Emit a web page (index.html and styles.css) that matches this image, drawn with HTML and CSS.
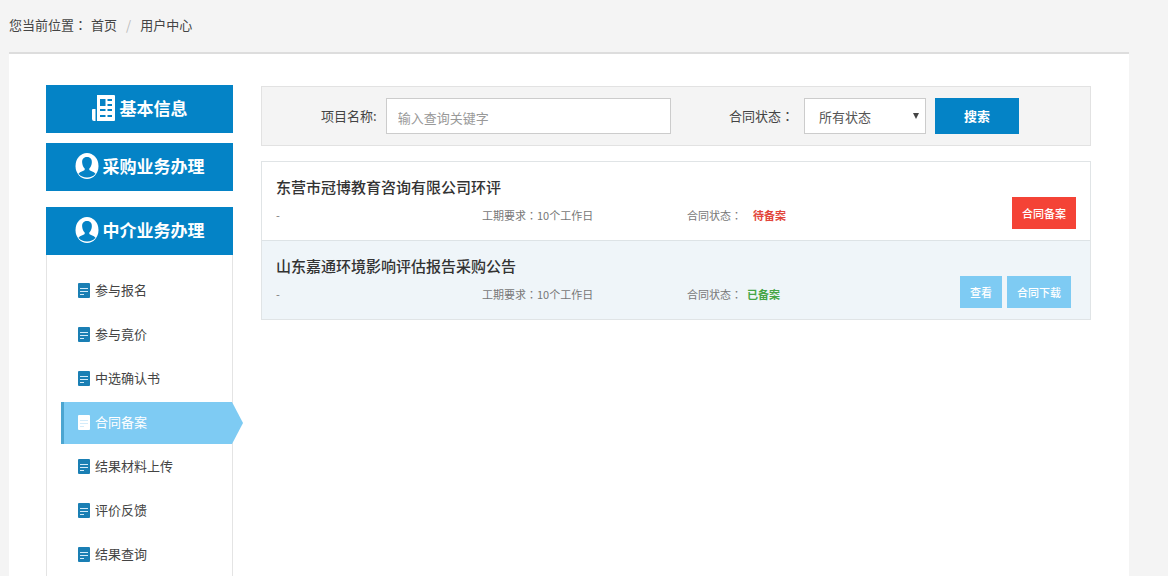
FILE: index.html
```html
<!DOCTYPE html>
<html lang="zh-CN">
<head>
<meta charset="utf-8">
<meta name="viewport" content="width=device-width, initial-scale=1">
<title>用户中心</title>
<link rel="stylesheet" href="styles.css">
</head>
<body>
<svg class="sprite" aria-hidden="true">
  <symbol id="icon-news" viewBox="0 0 24 26">
    <path fill="currentColor" fill-rule="evenodd" d="M5 0h17q1 0 1 1v24q0 1-1 1H5zM8 4v7h5.500V4zM15.500 4v2h4.500V4zM15.500 9v2h4.500V9zM8 14v2h5.500v-2zM15.500 14v2h4.500v-2zM8 20v2h5.500v-2zM15.500 20v2h4.500v-2zM1 14h2.500v12H2q-2 0-2-2v-9q0-1 1-1z"/>
  </symbol>
  <symbol id="icon-user" viewBox="0 0 24 26">
    <ellipse cx="12" cy="13" rx="11.500" ry="13" fill="currentColor"/>
    <path class="user-shape" d="M12 4c-3.600 0-5.200 2.500-4.800 6 .3 2.400 1.200 4.300 2.500 5.500v1.600c-1.300 1.400-4.400 1.500-6.200 3.600C5.500 23.300 8.500 24.500 12 24.500s6.500-1.200 8.500-3.800c-1.800-2.100-4.900-2.200-6.200-3.600v-1.600c1.300-1.200 2.200-3.100 2.500-5.500.4-3.500-1.200-6-4.800-6z"/>
  </symbol>
  <symbol id="icon-doc" viewBox="0 0 12 15">
    <rect width="12" height="15" rx="1" fill="currentColor"/>
    <path class="doc-lines" d="M2 5.500h8M2 8.500h8M2 11.500h4"/>
  </symbol>
</svg>

<nav class="breadcrumb" aria-label="您当前位置">
  <span>您当前位置<span class="colon" lang="zh-TW">：</span></span>
  <a href="#">首页</a>
  <span class="slash">/</span>
  <a href="#">用户中心</a>
</nav>

<div class="panel">
  <aside class="sidebar">
    <a class="side-title" href="#"><svg class="title-icon"><use href="#icon-news"/></svg>基本信息</a>
    <a class="side-title" href="#"><svg class="title-icon"><use href="#icon-user"/></svg>采购业务办理</a>
    <div class="side-group">
      <a class="side-title" href="#"><svg class="title-icon"><use href="#icon-user"/></svg>中介业务办理</a>
      <ul class="menu">
        <li><a class="menu-item" href="#"><svg class="doc-icon"><use href="#icon-doc"/></svg>参与报名</a></li>
        <li><a class="menu-item" href="#"><svg class="doc-icon"><use href="#icon-doc"/></svg>参与竟价</a></li>
        <li><a class="menu-item" href="#"><svg class="doc-icon"><use href="#icon-doc"/></svg>中选确认书</a></li>
        <li><a class="menu-item active" href="#" aria-current="page"><svg class="doc-icon"><use href="#icon-doc"/></svg>合同备案</a></li>
        <li><a class="menu-item" href="#"><svg class="doc-icon"><use href="#icon-doc"/></svg>结果材料上传</a></li>
        <li><a class="menu-item" href="#"><svg class="doc-icon"><use href="#icon-doc"/></svg>评价反馈</a></li>
        <li><a class="menu-item" href="#"><svg class="doc-icon"><use href="#icon-doc"/></svg>结果查询</a></li>
      </ul>
    </div>
  </aside>

  <main class="content">
    <form class="search">
      <div class="field">
        <label for="name">项目名称:</label>
        <input id="name" class="text-box" type="text" placeholder="输入查询关键字">
      </div>
      <div class="field">
        <label for="state">合同状态<span class="colon" lang="zh-TW">：</span></label>
        <span class="select-wrap">
          <select id="state" class="select-box"><option>所有状态</option></select>
        </span>
        <button class="search-button" type="button">搜索</button>
      </div>
    </form>

    <section class="list">
      <article class="row">
        <h2 class="row-title">东营市冠博教育咨询有限公司环评</h2>
        <div class="row-meta">
          <span>-</span>
          <span>工期要求<span class="colon" lang="zh-TW">：</span>10个工作日</span>
          <span>合同状态<span class="colon" lang="zh-TW">：</span><strong class="pending">待备案</strong></span>
        </div>
        <div class="row-actions">
          <button class="action danger" type="button">合同备案</button>
        </div>
      </article>
      <article class="row shaded">
        <h2 class="row-title">山东嘉通环境影响评估报告采购公告</h2>
        <div class="row-meta">
          <span>-</span>
          <span>工期要求<span class="colon" lang="zh-TW">：</span>10个工作日</span>
          <span>合同状态<span class="colon" lang="zh-TW">：</span><strong class="done">已备案</strong></span>
        </div>
        <div class="row-actions">
          <button class="action" type="button">查看</button>
          <button class="action" type="button">合同下载</button>
        </div>
      </article>
    </section>
  </main>
</div>
</body>
</html>
```
FILE: styles.css
```css
* {
  box-sizing: border-box;
}

body {
  margin: 0;
  min-height: 100vh;
  display: flex;
  flex-direction: column;
  background: #f4f4f4;
  color: #444;
  font: 13px/20px "Noto Sans CJK SC", sans-serif;
}

a {
  color: inherit;
  text-decoration: none;
}

input,
select,
button {
  font: inherit;
  border-radius: 0;
}

.sprite {
  display: none;
}

.colon {
  font-family: "Noto Sans CJK TC", sans-serif;
}

.breadcrumb {
  display: flex;
  padding: 15px 9px 17px;
}

.breadcrumb a:first-of-type {
  margin-left: 4px;
}

.slash {
  margin: 0 9px;
  color: #bbb;
}

.panel {
  flex: 1;
  display: flex;
  align-items: stretch;
  gap: 28px;
  margin: 0 39px 0 9px;
  padding: 31px 38px 0 37px;
  background: #fff;
  border-top: 2px solid #ddd;
}

.sidebar {
  flex: none;
  width: 187px;
  display: flex;
  flex-direction: column;
  gap: 10px;
}

.side-title {
  display: flex;
  align-items: center;
  justify-content: center;
  gap: 4px;
  height: 48px;
  padding-bottom: 2px;
  background: #0483c6;
  color: #fff;
  font-size: 17px;
  font-weight: 700;
}

.title-icon {
  width: 24px;
  height: 26px;
}

.user-shape {
  fill: #0483c6;
}

.side-group {
  flex: 1;
  display: flex;
  flex-direction: column;
  margin-top: 6px;
}

.menu {
  flex: 1;
  display: flex;
  flex-direction: column;
  gap: 2px;
  margin: 0;
  padding: 15px 0 0 14px;
  list-style: none;
  border: solid #e4e4e4;
  border-width: 0 1px;
}

.menu-item {
  position: relative;
  display: flex;
  align-items: center;
  gap: 5px;
  height: 42px;
  padding: 0 0 2px 14px;
  border-left: 3px solid transparent;
}

.doc-icon {
  width: 12px;
  height: 15px;
  color: #1a7fb4;
}

.doc-lines {
  fill: none;
  stroke: #d4ecfa;
}

.active {
  background: #7ecbf3;
  border-left-color: #4ba5d0;
  color: #fff;
}

.active .doc-icon {
  color: #fff;
}

.active::after {
  content: "";
  position: absolute;
  top: 0;
  left: 100%;
  width: 11px;
  height: 100%;
  background: #7ecbf3;
  clip-path: polygon(0 0, 100% 50%, 0 100%);
}

.content {
  flex: 1;
  min-width: 0;
  padding-top: 1px;
}

.search {
  display: flex;
  align-items: center;
  justify-content: space-between;
  height: 60px;
  padding: 0 71px 0 59px;
  background: #f4f4f4;
  border: 1px solid #e2e2e2;
}

.field {
  display: flex;
  align-items: center;
  gap: 9px;
}

.field label .colon {
  margin-right: 1px;
}

.text-box,
.select-box {
  height: 36px;
  background: #fff;
  border: 1px solid #ccc;
  color: #555;
}

.text-box {
  width: 285px;
  padding: 2px 11px 0;
}

.text-box::placeholder {
  color: #999;
}

.select-wrap {
  position: relative;
}

.select-box {
  display: block;
  width: 122px;
  padding: 2px 14px 0;
  appearance: none;
}

.select-wrap::after {
  content: "";
  position: absolute;
  top: 15px;
  right: 7px;
  border: solid transparent;
  border-width: 6px 3px 0;
  border-top-color: #444;
  pointer-events: none;
}

.search-button {
  width: 84px;
  height: 36px;
  padding: 0;
  background: #0483c6;
  border: 0;
  color: #fff;
  font-weight: 700;
}

.list {
  margin-top: 15px;
  border: 1px solid #e0e4e6;
}

.row {
  display: grid;
  grid-template-columns: 1fr auto;
  align-items: center;
  padding: 15px 14px 11px;
}

.shaded {
  padding-right: 19px;
  background: #eff5f9;
  border-top: 1px solid #dde3e6;
}

.row-title {
  grid-column: 1 / -1;
  margin: 0;
  color: #333;
  font-size: 15px;
  line-height: 20px;
  font-weight: 500;
}

.row-meta {
  grid-column: 1 / -1;
  grid-row: 2;
  display: grid;
  grid-template-columns: 206px 205px 1fr;
  padding-top: 4px;
  color: #777;
  font-size: 11px;
}

.row-meta strong {
  margin-left: 5px;
  font-weight: 700;
}

.row-meta .pending {
  margin-left: 11px;
  color: #e2453b;
}

.done {
  color: #46a546;
}

.row-actions {
  grid-column: 2;
  grid-row: 2;
  display: flex;
  gap: 5px;
}

.action {
  height: 32px;
  padding: 0 10px;
  background: #7ecbf3;
  border: 0;
  color: #fff;
  font-size: 11px;
  font-weight: 500;
}

.danger {
  background: #f44336;
}
```
